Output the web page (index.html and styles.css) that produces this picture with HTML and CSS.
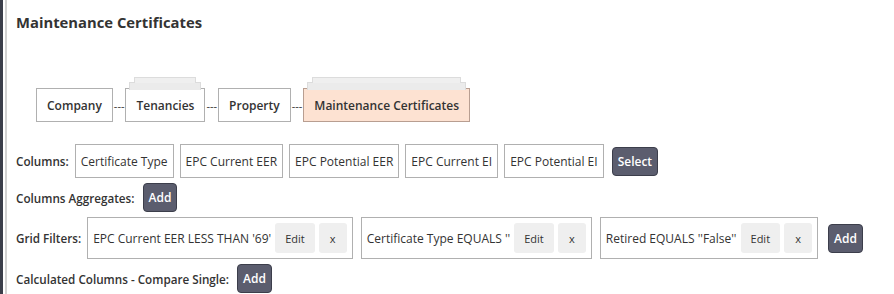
FILE: index.html
```html
<!DOCTYPE html>
<html lang="en">
<head>
  <meta charset="UTF-8" />
  <title>Maintenance Certificates</title>
  <link rel="stylesheet" href="styles.css">
</head>
<body>
  <div class="frame">
    <div class="panel">
      <h2 class="title">Maintenance Certificates</h2>

      <!-- entity path -->
      <div class="path">
        <div class="node">Company</div>
        <span class="link">---</span>
        <div class="node stacked">Tenancies</div>
        <span class="link">---</span>
        <div class="node">Property</div>
        <span class="link">---</span>
        <div class="node stacked current">Maintenance Certificates</div>
      </div>

      <div class="row">
        <span class="label">Columns:</span>
        <div class="chip">Certificate Type</div>
        <div class="chip">EPC Current EER</div>
        <div class="chip">EPC Potential EER</div>
        <div class="chip">EPC Current EI</div>
        <div class="chip">EPC Potential EI</div>
        <button class="btn">Select</button>
      </div>

      <div class="row">
        <span class="label">Columns Aggregates:</span>
        <button class="btn">Add</button>
      </div>

      <div class="row">
        <span class="label">Grid Filters:</span>
        <div class="filter">
          <span>EPC Current EER LESS THAN '69'</span>
          <button class="mini">Edit</button>
          <button class="mini">x</button>
        </div>
        <div class="filter">
          <span>Certificate Type EQUALS ''</span>
          <button class="mini">Edit</button>
          <button class="mini">x</button>
        </div>
        <div class="filter">
          <span>Retired EQUALS ''False''</span>
          <button class="mini">Edit</button>
          <button class="mini">x</button>
        </div>
        <button class="btn">Add</button>
      </div>

      <div class="row">
        <span class="label">Calculated Columns - Compare Single:</span>
        <button class="btn">Add</button>
      </div>
    </div>
  </div>
</body>
</html>
```

FILE: styles.css
```css
* {
  margin: 0;
  padding: 0;
  box-sizing: border-box;
}

body {
  font-family: 'Open Sans', 'Noto Sans', sans-serif;
  font-size: 12px;
  color: #333;
  background: #fff;
}

.frame {
  border-left: 3px solid #3b3e4a;
  padding-left: 2px;
  height: 294px;
}

.panel {
  border-left: 2px solid #d2d2d2;
  height: 100%;
  padding: 12px 0 0 9px;
}

.title {
  font-size: 14.8px;
  font-weight: 700;
  line-height: 20px;
  color: #333;
}

.path {
  display: flex;
  align-items: center;
  margin: 56px 0 0 20px;
}

.node {
  position: relative;
  background: #fff;
  border: 1px solid #b0b0b0;
  height: 34px;
  padding: 0 10px;
  display: flex;
  align-items: center;
  font-weight: 600;
}

.node.stacked::before,
.node.stacked::after {
  content: '';
  position: absolute;
  border: 1px solid #dcdcdc;
  border-bottom: none;
  background: #ebebeb;
}

.node.stacked::before {
  left: 3px;
  right: 3px;
  top: -7px;
  height: 7px;
}

.node.stacked::after {
  left: 8px;
  right: 8px;
  top: -12px;
  height: 5px;
  background: #efefef;
}

.node.current {
  background: #fde2d2;
  border-color: #b89e91;
}

.link {
  font-size: 11px;
  padding: 0 1px;
}

.row {
  display: flex;
  align-items: center;
  gap: 6px;
  margin-top: 5px;
}

.path + .row {
  margin-top: 22px;
}

.label {
  font-size: 11.7px;
  font-weight: 600;
}

.chip {
  border: 1px solid #b0b0b0;
  height: 34px;
  padding: 0 5px;
  display: flex;
  align-items: center;
}

.btn {
  font-family: inherit;
  font-size: 12px;
  font-weight: 600;
  color: #fff;
  background: #5b5d6e;
  border: 1px solid #3c3e4b;
  border-radius: 4px;
  height: 29px;
  padding: 0 5px;
  margin-left: 2px;
}

.filter {
  border: 1px solid #b0b0b0;
  height: 42px;
  padding: 0 5px;
  margin-right: 2px;
  display: flex;
  align-items: center;
  gap: 4px;
}

.mini {
  font-family: inherit;
  font-size: 11px;
  color: #333;
  background: #efefef;
  border: none;
  border-radius: 3px;
  height: 30px;
  min-width: 28px;
  padding: 0 10px;
}
```
